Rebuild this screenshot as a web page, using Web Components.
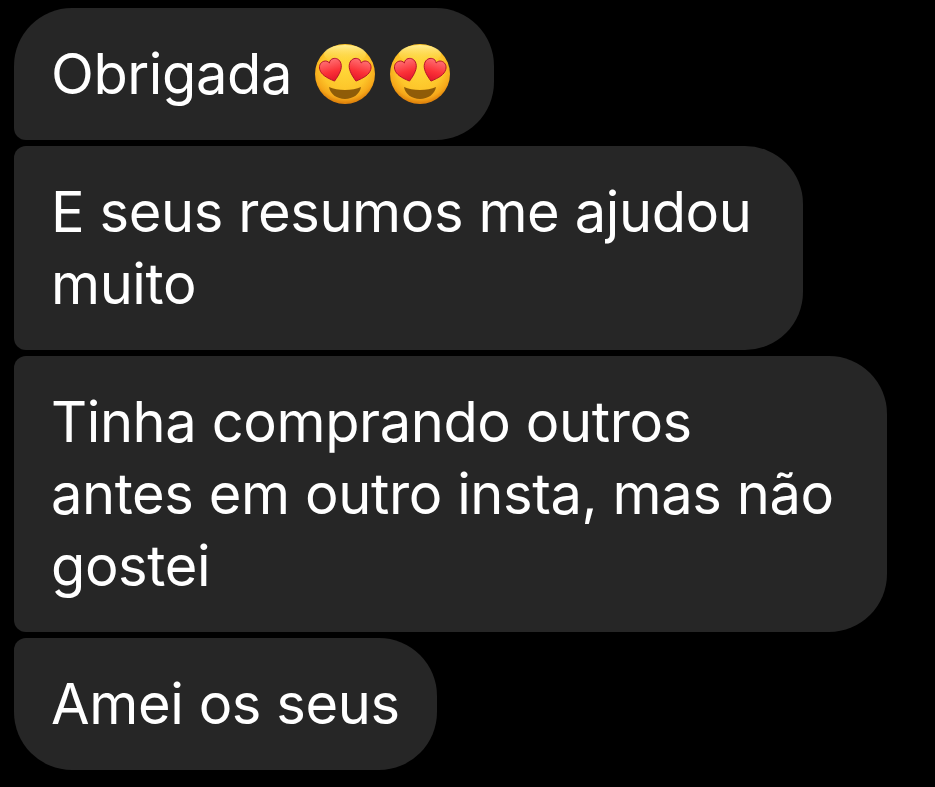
<!DOCTYPE html>
<html lang="pt">
<head>
<meta charset="utf-8">
<style>
  html, body { margin: 0; background: #000; }
  body { width: 935px; height: 787px; overflow: hidden; font-family: Inter, "Noto Sans", sans-serif; }
</style>
</head>
<body>
<chat-thread>
  <chat-bubble pos="first" style="--w:480px">Obrigada <heart-eyes></heart-eyes><heart-eyes></heart-eyes></chat-bubble>
  <chat-bubble style="--w:789px">E seus resumos me ajudou<br>muito</chat-bubble>
  <chat-bubble style="--w:873px">Tinha comprando outros<br>antes em outro insta, mas não<br>gostei</chat-bubble>
  <chat-bubble pos="last" style="--w:423px">Amei os seus</chat-bubble>
</chat-thread>
<script>
const html = String.raw;

class ChatThread extends HTMLElement {
  constructor() {
    super();
    this.attachShadow({ mode: 'open' });
    this.shadowRoot.innerHTML = html`
      <style>
        :host {
          display: flex;
          flex-direction: column;
          align-items: flex-start;
          gap: 6px;
          padding: 8px 0 0 14px;
        }
      </style>
      <slot></slot>
    `;
  }
}

class ChatBubble extends HTMLElement {
  constructor() {
    super();
    this.attachShadow({ mode: 'open' });
    this.shadowRoot.innerHTML = html`
      <style>
        :host {
          display: block;
          box-sizing: border-box;
          width: var(--w);
          padding: 30px 0 30px 37px;
          background: #262626;
          color: #fff;
          font-size: 56px;
          font-weight: 400;
          letter-spacing: -0.4px;
          line-height: 72px;
          border-radius: 12px 58px 58px 12px;
          white-space: nowrap;
        }
        /* only the outer left corners of the group are round */
        :host([pos="first"]) { border-top-left-radius: 58px; }
        :host([pos="last"]) { border-bottom-left-radius: 58px; }
      </style>
      <slot></slot>
    `;
  }
}

class HeartEyes extends HTMLElement {
  constructor() {
    super();
    this.attachShadow({ mode: 'open' });
    const heart = 'M0 11C-7 5.5-11 1-11-4.2C-11-8.4-8-11-4.8-11C-2.6-11-1-10 0-7.8C1-10 2.6-11 4.8-11C8-11 11-8.4 11-4.2C11 1 7 5.5 0 11Z';
    this.shadowRoot.innerHTML = html`
      <style>
        :host { display: inline-block; width: 60px; height: 60px; margin-left: 8px; margin-right: 15px; vertical-align: -10px; }
        :host(:last-child) { margin: 0; }
        svg { display: block; width: 100%; height: 100%; }
      </style>
      <svg viewBox="0 0 60 60" role="img" aria-label="heart eyes">
        <defs>
          <radialGradient id="face" cx="50%" cy="38%" r="60%">
            <stop offset="0" stop-color="#ffd93a"/>
            <stop offset="0.65" stop-color="#fdc52a"/>
            <stop offset="0.88" stop-color="#f6a81a"/>
            <stop offset="1" stop-color="#e0840c"/>
          </radialGradient>
          <linearGradient id="shine" x1="0" y1="0" x2="0" y2="1">
            <stop offset="0" stop-color="#fff2a0" stop-opacity=".9"/>
            <stop offset="1" stop-color="#ffe14d" stop-opacity="0"/>
          </linearGradient>
          <linearGradient id="heart" x1="0" y1="0" x2="0" y2="1">
            <stop offset="0" stop-color="#ff6f72"/>
            <stop offset="0.55" stop-color="#fb3238"/>
            <stop offset="1" stop-color="#e3142a"/>
          </linearGradient>
        </defs>
        <circle cx="30" cy="30" r="30" fill="url(#face)"/>
        <ellipse cx="30" cy="10" rx="21" ry="9" fill="url(#shine)"/>
        <path d="M14 43C22 47 38 47 46 43C45 50 38 55 30 55C22 55 15 50 14 43Z" fill="#8f5c08"/>
        <path d="${heart}" transform="translate(16.5 26.5) rotate(-16)" fill="url(#heart)" stroke="#b3122a" stroke-width=".9"/>
        <path d="${heart}" transform="translate(44 26.5) rotate(16)" fill="url(#heart)" stroke="#b3122a" stroke-width=".9"/>
      </svg>
    `;
  }
}

customElements.define('chat-thread', ChatThread);
customElements.define('chat-bubble', ChatBubble);
customElements.define('heart-eyes', HeartEyes);
</script>
</body>
</html>
